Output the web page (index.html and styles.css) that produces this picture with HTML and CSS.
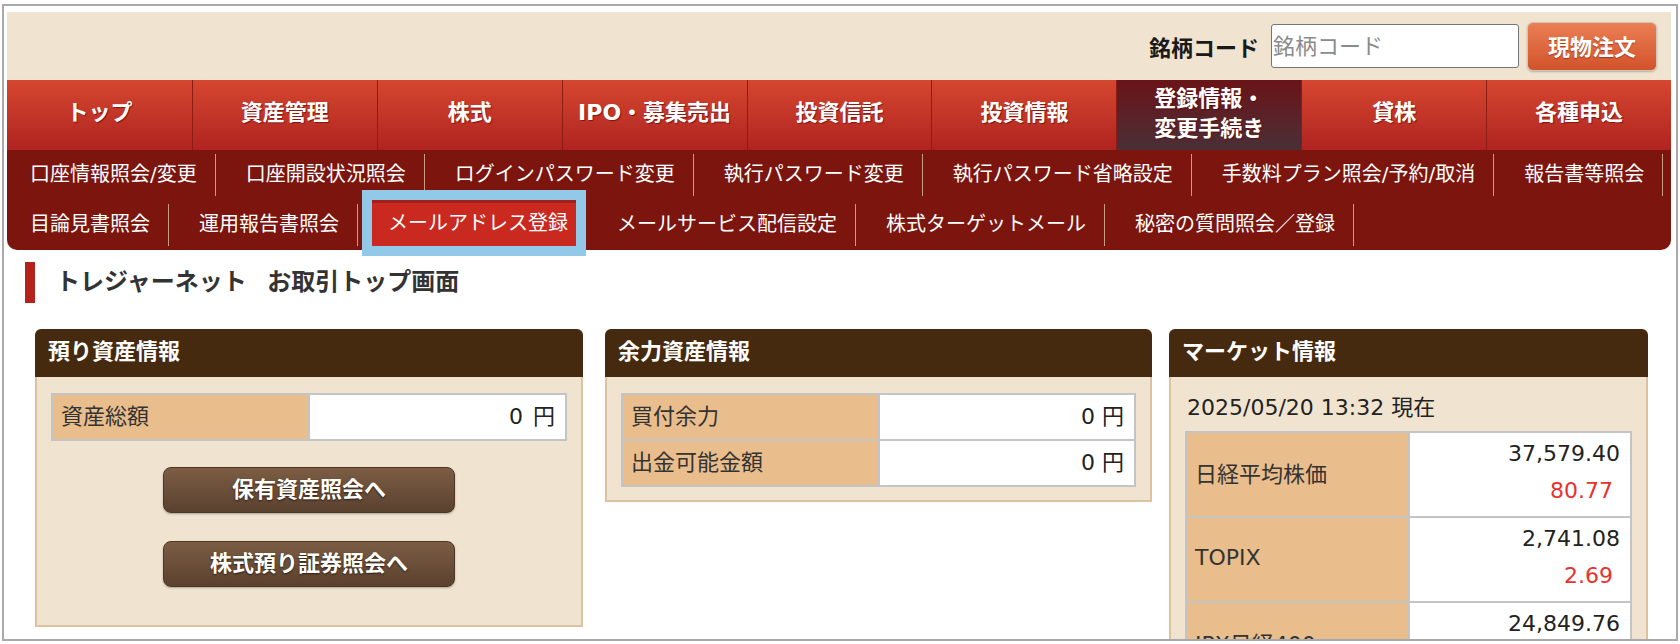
FILE: index.html
```html
<!DOCTYPE html>
<html lang="ja">
<head>
<meta charset="utf-8">
<title>トレジャーネット お取引トップ画面</title>
<link rel="stylesheet" href="styles.css">
</head>
<body>
<div class="frame">
  <div class="topbar">
    <span class="code-label">銘柄コード</span>
    <input class="code-input" type="text" placeholder="銘柄コード">
    <button class="order-btn" type="button">現物注文</button>
  </div>

  <nav class="gnav">
    <a class="gnav-item">トップ</a>
    <a class="gnav-item">資産管理</a>
    <a class="gnav-item">株式</a>
    <a class="gnav-item">IPO・募集売出</a>
    <a class="gnav-item">投資信託</a>
    <a class="gnav-item">投資情報</a>
    <a class="gnav-item is-current">登録情報・<br>変更手続き</a>
    <a class="gnav-item">貸株</a>
    <a class="gnav-item">各種申込</a>
  </nav>

  <div class="subnav">
    <ul class="subnav-row">
      <li><a>口座情報照会/変更</a></li>
      <li><a>口座開設状況照会</a></li>
      <li><a>ログインパスワード変更</a></li>
      <li><a>執行パスワード変更</a></li>
      <li><a>執行パスワード省略設定</a></li>
      <li><a>手数料プラン照会/予約/取消</a></li>
      <li><a>報告書等照会</a></li>
    </ul>
    <ul class="subnav-row">
      <li><a>目論見書照会</a></li>
      <li><a>運用報告書照会</a></li>
      <li class="is-current"><a>メールアドレス登録</a></li>
      <li><a>メールサービス配信設定</a></li>
      <li><a>株式ターゲットメール</a></li>
      <li><a>秘密の質問照会／登録</a></li>
    </ul>
  </div>

  <h1 class="page-title">トレジャーネット お取引トップ画面</h1>

  <div class="panels">
    <section class="panel panel-assets">
      <h2 class="panel-head">預り資産情報</h2>
      <div class="panel-body">
        <table class="info-table">
          <tr><th>資産総額</th><td class="wide">0 円</td></tr>
        </table>
        <div class="btns">
          <a class="brown-btn">保有資産照会へ</a>
          <a class="brown-btn">株式預り証券照会へ</a>
        </div>
      </div>
    </section>

    <section class="panel panel-power">
      <h2 class="panel-head">余力資産情報</h2>
      <div class="panel-body">
        <table class="info-table">
          <tr><th>買付余力</th><td>0 円</td></tr>
          <tr><th>出金可能金額</th><td>0 円</td></tr>
        </table>
      </div>
    </section>

    <section class="panel panel-market">
      <h2 class="panel-head">マーケット情報</h2>
      <div class="panel-body">
        <p class="market-date">2025/05/20 13:32 現在</p>
        <table class="info-table market-table">
          <tr><th>日経平均株価</th><td><span class="val">37,579.40</span><span class="chg">80.77</span></td></tr>
          <tr><th>TOPIX</th><td><span class="val">2,741.08</span><span class="chg">2.69</span></td></tr>
          <tr><th>JPX日経400</th><td><span class="val">24,849.76</span></td></tr>
        </table>
      </div>
    </section>
  </div>
</div>
</body>
</html>
```

FILE: styles.css
```css
* { box-sizing: border-box; }

html, body {
  margin: 0;
  padding: 0;
  background: #ffffff;
}

body {
  font-family: "DejaVu Sans", "Noto Sans CJK JP", sans-serif;
  font-size: 22px;
  color: #333333;
}

.frame {
  margin: 4px 2px 0 2px;
  height: 637px;
  border: 2px solid #a9a9a9;
  padding: 6px 5px 0 3px;
  overflow: hidden;
}

/* ---------- top bar ---------- */
.topbar {
  height: 68px;
  background: #f0e4d1;
  display: flex;
  justify-content: flex-end;
  align-items: center;
  padding-right: 14px;
}

.code-label {
  font-weight: bold;
  font-size: 22px;
  color: #1a1a1a;
  margin-right: 12px;
}

.code-input {
  width: 248px;
  height: 44px;
  border: 1px solid #767676;
  border-radius: 3px;
  padding: 0 1px;
  font-family: "DejaVu Sans", "Noto Sans CJK JP", sans-serif;
  font-size: 22px;
  color: #333;
  background: #fff;
  margin-right: 8px;
}

.code-input::placeholder { color: #8b8b8b; }

.order-btn {
  width: 130px;
  height: 49px;
  border: 1px solid #cfc6bc;
  border-radius: 6px;
  background: linear-gradient(#eb7f55, #d2522a);
  color: #fff;
  font-family: "DejaVu Sans", "Noto Sans CJK JP", sans-serif;
  font-size: 22px;
  font-weight: bold;
  text-shadow: 0 1px 1px rgba(110, 25, 0, 0.55);
  box-shadow: 0 1px 2px rgba(0, 0, 0, 0.25);
  padding: 0 0 2px;
}

/* ---------- global nav ---------- */
.gnav {
  display: grid;
  grid-template-columns: repeat(9, 1fr);
  height: 70px;
}

.gnav-item {
  display: flex;
  align-items: center;
  justify-content: center;
  text-align: center;
  color: #ffffff;
  font-weight: bold;
  font-size: 22px;
  line-height: 30px;
  padding-bottom: 4px;
  background: linear-gradient(#d5472f, #b02320);
  border-left: 1px solid #8d1c15;
  text-shadow: 1px 1px 1px rgba(90, 0, 0, 0.6);
}

.gnav-item:first-child { border-left: none; }

.gnav-item.is-current {
  background: linear-gradient(#6b1418, #4a2f37);
  padding-bottom: 2px;
}

/* ---------- sub nav ---------- */
.subnav {
  background: #7b150e;
  height: 100px;
  border-radius: 0 0 10px 10px;
}

.subnav-row {
  list-style: none;
  margin: 0;
  padding: 0;
  height: 50px;
  display: flex;
  align-items: center;
}

.subnav-row li {
  height: 42px;
  display: flex;
  align-items: center;
  padding: 0 18px 5px 30px;
  border-right: 1px solid #c79d86;
  font-size: 20px;
  color: #ffffff;
  white-space: nowrap;
}

.subnav-row li:first-child { padding-left: 23px; }

.subnav-row li.is-current {
  align-self: flex-start;
  height: 46px;
  padding-bottom: 0;
  border-right-color: transparent;
}

.subnav-row li.is-current a {
  position: relative;
  z-index: 2;
  display: flex;
  align-items: center;
  height: 46px;
  margin: 0 -8px 0 -16px;
  padding: 0 8px 3px 16px;
  background: #c9291e;
  box-shadow: inset 0 3px 0 #a0211a, 0 0 0 10px #92c8e8;
}

/* ---------- title ---------- */
.page-title {
  margin: 12px 0 0 18px;
  height: 41px;
  border-left: 10px solid #b5221b;
  padding: 0 0 6px 21px;
  display: flex;
  align-items: center;
  font-size: 24px;
  font-weight: bold;
  word-spacing: 12px;
  white-space: pre;
  color: #333333;
}

/* ---------- panels ---------- */
.panels {
  display: flex;
  align-items: flex-start;
  margin-top: 26px;
  padding-left: 28px;
}

.panel-assets { width: 548px; margin-right: 22px; }
.panel-power { width: 547px; margin-right: 17px; }
.panel-market { width: 479px; }

.panel-head {
  margin: 0;
  height: 48px;
  line-height: 46px;
  padding-left: 13px;
  background: #452a10;
  color: #ffffff;
  font-size: 22px;
  font-weight: bold;
  border-radius: 6px 6px 0 0;
}

.panel-body {
  background: #f0e4d1;
  border: 2px solid #dcc29e;
  border-top: none;
  padding: 16px 14px 13px;
}

.panel-assets .panel-body { padding-bottom: 38px; }

.info-table {
  width: 100%;
  border-collapse: collapse;
  table-layout: fixed;
}

.info-table th,
.info-table td {
  border: 2px solid #c4c4c4;
  height: 46px;
  font-size: 22px;
}

.info-table th {
  width: 50%;
  background: #e9bd8c;
  text-align: left;
  font-weight: normal;
  padding: 0 8px 6px;
  color: #333333;
}

.info-table td {
  background: #ffffff;
  text-align: right;
  padding: 0 10px 6px;
  color: #222222;
}

.info-table td.wide { word-spacing: 3px; }

.btns {
  display: flex;
  flex-direction: column;
  align-items: center;
  gap: 28px;
  margin-top: 26px;
}

.brown-btn {
  width: 292px;
  height: 46px;
  display: flex;
  align-items: center;
  justify-content: center;
  padding-bottom: 7px;
  border-radius: 8px;
  border: 1px solid #4d3726;
  background: linear-gradient(#7c5d44, #5a412f);
  color: #ffffff;
  font-size: 22px;
  font-weight: bold;
  text-shadow: 0 1px 2px #2a1a0e;
  box-shadow: 0 1px 2px rgba(0, 0, 0, 0.3);
}

.market-date {
  margin: 0 0 8px 2px;
  line-height: 30px;
  font-size: 22px;
  color: #222222;
}

.market-table th,
.market-table td { height: 85px; }

.market-table th { padding-bottom: 5px; }

.market-table td {
  vertical-align: top;
  padding: 2px 10px 0;
}

.market-table .val,
.market-table .chg {
  display: block;
  line-height: 37px;
}

.market-table .chg {
  color: #e8322e;
  padding-right: 7px;
}
```
